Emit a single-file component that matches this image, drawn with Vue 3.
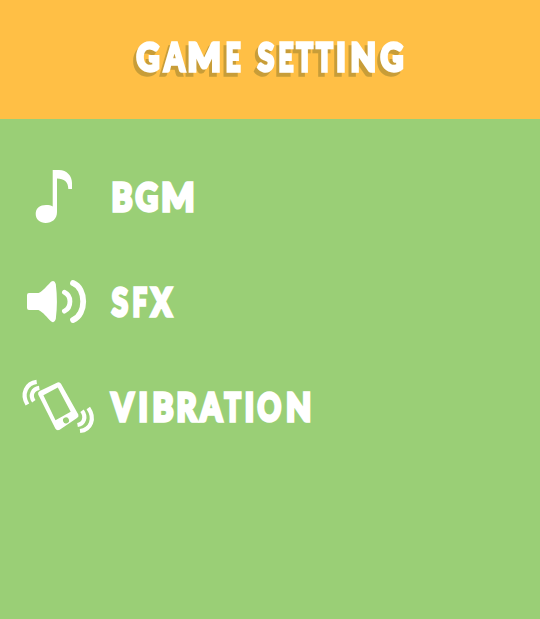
<script setup>
const FONT_SIZE = 38.8
const STROKE = 3.4
const MEASURE = 1000
const ctx = document.createElement('canvas').getContext('2d')
ctx.font = `900 ${MEASURE}px Lato`

// Each letter: [character, left edge, right edge]; condensed to fit its slot.
function fit(letters) {
  const unit = FONT_SIZE / MEASURE
  return letters.map(([char, left, right]) => {
    const m = ctx.measureText(char)
    const ink = (m.actualBoundingBoxRight + m.actualBoundingBoxLeft) * unit
    const scale = (right - left) / (ink + STROKE)
    return {
      char,
      x: left + (STROKE / 2 + m.actualBoundingBoxLeft * unit) * scale,
      length: m.width * unit * scale
    }
  })
}

const title = [
  fit([['G', 136.2, 159.8], ['A', 162.4, 186.3], ['M', 188.2, 220.3], ['E', 226.3, 241]]),
  fit([['S', 256.8, 274.7], ['E', 279, 293.8], ['T', 295.2, 313.6], ['T', 315, 333.5], ['I', 336.9, 345], ['N', 351, 375], ['G', 380, 403.4]])
]
const rows = [
  { id: 'bgm', letters: fit([['B', 12, 32.6], ['G', 35, 58.2], ['M', 62, 94]]) },
  { id: 'sfx', letters: fit([['S', 11, 28.8], ['F', 33, 47.6], ['X', 49.4, 73.2]]) },
  { id: 'vibration', letters: fit([['V', 9.6, 35.4], ['I', 39, 47], ['B', 53, 73.6], ['R', 77, 98.2], ['A', 98.3, 123.8], ['T', 123.2, 141.6], ['I', 145.4, 153.4], ['O', 157.2, 181.6], ['N', 186.6, 210.4]]) }
]
</script>

<template>
  <main class="screen">
    <header class="header">
      <svg class="lettering shadow" width="540" height="119" viewBox="0 0 540 119">
        <text v-for="(word, w) in title" :key="w" y="71.4"><tspan v-for="(l, i) in word" :key="i" :x="l.x" :textLength="l.length" lengthAdjust="spacingAndGlyphs">{{ l.char }}</tspan></text>
      </svg>
    </header>
    <section class="settings">
      <div v-for="row in rows" :key="row.id" class="row">
        <svg v-if="row.id === 'bgm'" class="icon" viewBox="0 145 100 105">
          <path d="M52.7 170H59C67 170 72 176 72 183V189H68.3C68.3 182 64 178.6 57 178.6V212C57 219 52 223 45.6 223C40 223 35.7 219.5 35.7 214C35.7 208 40 205 46 205C49 205 51 205.3 52.7 206.5Z" />
        </svg>
        <svg v-else-if="row.id === 'sfx'" class="icon" viewBox="0 250 100 105">
          <path d="M29 293H38.5C43 291 47.5 285.2 51 281.7Q54.5 279.3 55.8 284Q58 301.5 55.8 319Q54.5 323.8 51 321.3C47.5 318 43 312 38.5 310H29Q27 310 27 308V295Q27 293 29 293Z" />
          <path class="line" stroke-width="4.8" d="M64.4 292.2C71.8 295.5 71.8 307.5 64.4 311.2" />
          <path class="line" stroke-width="5.8" d="M73 283C86.6 288.3 86.6 314.5 73 320" />
        </svg>
        <svg v-else class="icon" viewBox="0 355 100 105">
          <path fill-rule="evenodd" d="M39.7 391L57.5 382.4Q59.8 381.6 61 383.7L78.3 414.5Q79.2 416.7 77 418L59.7 429.7Q56.8 431 55.3 428.5L38.2 394.4Q37.4 392.2 39.7 391ZM43.4 395.2L57.8 387.4L70.7 411.8L55.5 420.2ZM68.8 419.3A3 3 0 1 0 63.2 421.5A3 3 0 1 0 68.8 419.3Z" />
          <path class="arc" d="M36.7 381.8C26.5 383 21 393.8 27.4 404.5" />
          <path class="arc" d="M39.3 387.8C32.6 388.8 29.6 395.5 33.8 401.3" />
          <path class="arc" d="M88.3 408C95.5 418.5 91 429.8 80 431" />
          <path class="arc" d="M82 410.8C86.6 417 84 423.9 77.5 425" />
        </svg>
        <svg class="lettering" width="300" height="105" viewBox="0 0 300 105">
          <text y="66.4"><tspan v-for="(l, i) in row.letters" :key="i" :x="l.x" :textLength="l.length" lengthAdjust="spacingAndGlyphs">{{ l.char }}</tspan></text>
        </svg>
      </div>
    </section>
  </main>
</template>

<style>
body { margin: 0; }
</style>

<style scoped>
.screen { width: 540px; height: 619px; background: #9acf76; overflow: hidden; }
.header { height: 119px; background: #ffbf45; }
.settings { padding-top: 26px; }
.row { display: flex; height: 105px; }
.icon { width: 100px; height: 105px; fill: #fff; }
.line, .arc { fill: none; stroke: #fff; }
.line { stroke-linecap: round; }
.arc { stroke-width: 4.2; }
.lettering { display: block; font: 900 38.8px Lato, sans-serif; fill: #fff; stroke: #fff; stroke-width: 3.4px; }
.shadow { filter: drop-shadow(-3px 4px 0 #c89d38); }
</style>
